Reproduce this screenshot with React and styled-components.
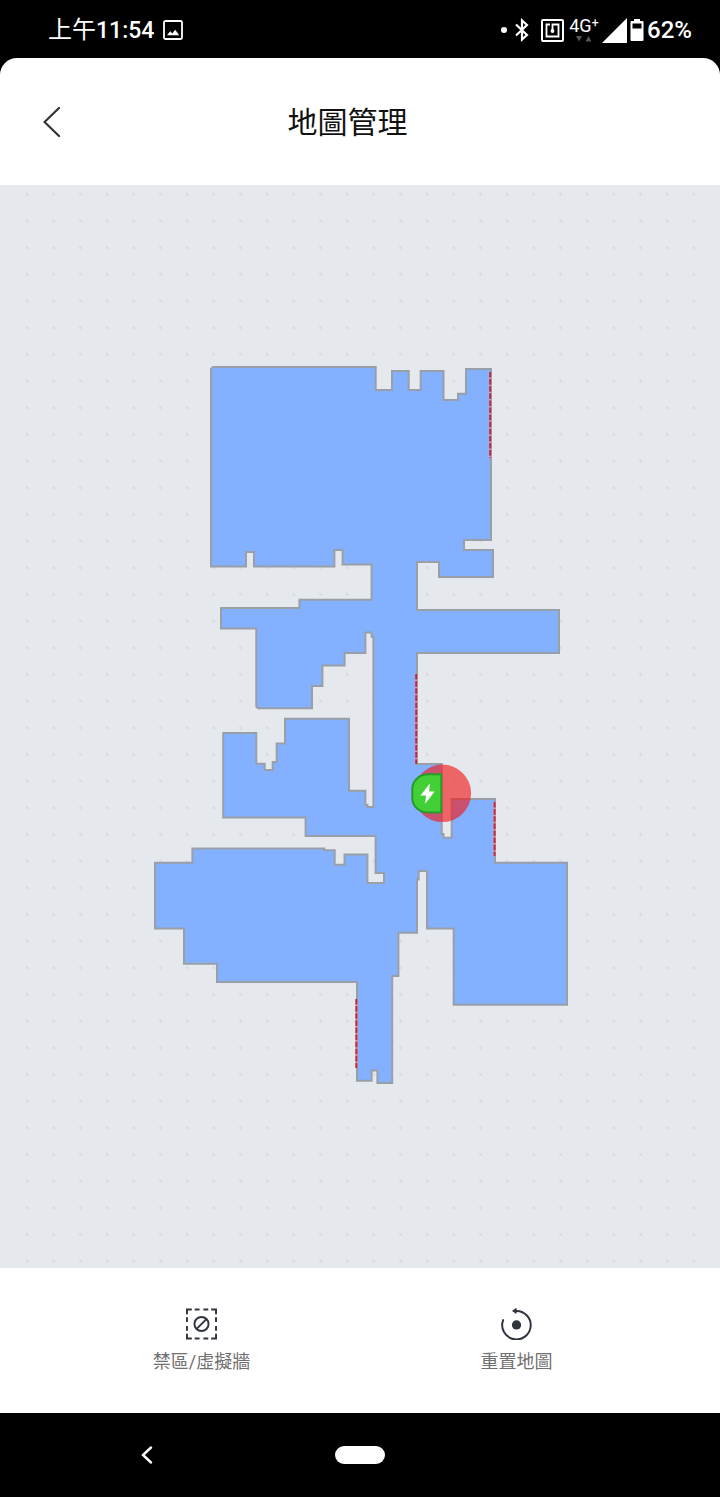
import React from 'react'
import styled, { createGlobalStyle } from 'styled-components'

const GlobalStyle = createGlobalStyle`
    * {
        box-sizing: border-box;
    }

    body {
        margin: 0;
        background: #000;
        font-family: Roboto, "Noto Sans CJK TC", sans-serif;
    }

    button {
        padding: 0;
        border: 0;
        background: none;
        font: inherit;
        color: inherit;
        cursor: pointer;
    }

    svg {
        display: block;
        flex-shrink: 0;
    }
`

const Screen = styled.div`
    display: flex;
    flex-direction: column;
    min-height: 100vh;
`

const StatusBar = styled.div`
    display: flex;
    justify-content: space-between;
    align-items: center;
    height: 58px;
    padding: 2px 28px 0 48px;
    color: #fff;
    font-size: 24px;
    font-weight: 500;
    line-height: 32px;
`

const StatusGroup = styled.div`
    display: flex;
    align-items: center;
    gap: ${props => props.$gap}px;
`

const Time = styled.time`
    font-size: 23px;
`

const Period = styled.span`
    font-size: 24px;
    font-weight: 400;
`

const Radios = styled.div`
    display: flex;
    align-items: center;
    gap: 5px;
    margin-left: 9px;
`

const Network = styled.div`
    display: flex;
    flex-direction: column;
    align-items: center;
    gap: 2px;
    width: 30px;
    font-size: 18px;
    font-weight: 400;
    line-height: 16px;
    white-space: nowrap;

    sup {
        font-size: 13px;
        line-height: 0;
        vertical-align: 5px;
    }
`

const Page = styled.div`
    flex: 1;
    display: flex;
    flex-direction: column;
    overflow: hidden;
    border-radius: 17px 17px 0 0;
    background: #fff;
`

const Header = styled.header`
    display: grid;
    grid-template-columns: 104px 1fr 104px;
    align-items: center;
    height: 127px;
    padding-right: 25px;
`

const BackButton = styled.button`
    display: flex;
    justify-content: center;
    align-items: center;
    height: 64px;
`

const Title = styled.h1`
    margin: 0;
    padding-top: 2px;
    color: #111;
    font-size: 30px;
    font-weight: 400;
    line-height: 40px;
    text-align: center;
`

const MapArea = styled.main`
    flex: 1;
    display: flex;
    background: #e5e8ed;

    svg {
        flex: 1;
        width: 100%;
    }
`

const Actions = styled.footer`
    display: flex;
    height: 145px;
    padding: 2px 46px 0 44px;
`

const ActionButton = styled.button`
    flex: 1;
    display: flex;
    flex-direction: column;
    justify-content: center;
    align-items: center;
    gap: 9px;
`

const ActionLabel = styled.span`
    color: #707070;
    font-size: 18px;
    line-height: 26px;
`

const NavBar = styled.nav`
    display: grid;
    grid-template-columns: 1fr 132px 1fr;
    align-items: center;
    height: 84px;
`

const NavButton = styled.button`
    display: flex;
    justify-content: center;
    align-items: center;
    height: 48px;
`

const HomePill = styled.span`
    width: 50px;
    height: 18px;
    border-radius: 9px;
    background: #fff;
`

const OUTLINE = `
    M211 369 L213 367 H375.7 V390 H392 V371 H408.7 V390 H420.7 V371 H443.5 V400 H458 V393.7 H466 V369 H491
    V540 H464 V550 H493 V577 H439 V562 H417 V610 H559 V653 H417 V764 H441.7 V834 H443.5 V837.7 H451.7 V799 H495
    V862.8 H567 V1004.7 H453.7 V928.5 H427 V871 H418.7 V879.5 H417 V932.7 H398.4 V976 H392.2 V1083 H377.4 V1070.4
    H371.6 V1080.7 H357 V982 H217 V963.7 H184 V928.5 H155 V862.8 H192.4 V848.5 H324.4 V850.3 H334.7 V864.7 H344.5
    V854.4 H367.4 V883 H384 V873 H375.6 V836 H305.6 V817.4 H223.2 V733 H256.3 V763.7 H264.7 V770 H272.7 V762 H276.7
    V743.4 H285 V718.7 H349 V790.7 H365.4 V805 H367.4 V807 H373.4 V636.7 H371.6 V632.4 H365.4 V653 H344.6 V665.4
    H322.4 V686 H312 V708.2 H258 L256.3 706.5 V628.4 H221 V608 H299.4 V599.7 H371.6 V564.5 H342.6 V550 H334.4
    V566.6 H254 V552 H246 V566.6 H211 Z
`

const WALLS = [
    { x: 490.2, y1: 372, y2: 458 },
    { x: 416.2, y1: 674, y2: 764 },
    { x: 494.6, y1: 802, y2: 856 },
    { x: 356.4, y1: 999, y2: 1068 },
]

function FloorMap() {
    return (
        <svg viewBox="0 185 720 1083" preserveAspectRatio="xMidYMid meet" overflow="visible" role="img" aria-label="地圖">
            <defs>
                <pattern id="dots" x="13.7" y="181" width="26.67" height="26.67" patternUnits="userSpaceOnUse">
                    <circle cx="13.33" cy="13.33" r="1.5" fill="#d7dadf" />
                </pattern>
            </defs>
            <rect x="13" y="185" width="694" height="1083" fill="url(#dots)" />
            <path d={OUTLINE} fill="#83b1ff" stroke="#999fa8" strokeWidth="2" />
            {WALLS.map(wall => (
                <g key={wall.y1}>
                    <path d={`M${wall.x} ${wall.y1}V${wall.y2}`} stroke="#d99bb0" strokeWidth="2.4" />
                    <path d={`M${wall.x} ${wall.y1}V${wall.y2}`} stroke="#c02634" strokeWidth="1.9" strokeDasharray="5.6 1.5" />
                </g>
            ))}
            <circle cx="442.3" cy="793.3" r="28.8" fill="#f31a1c" fillOpacity="0.64" />
            <path
                d="M441.3 774.3 H428.5 C419 774.3 412.3 781 412.3 789 V798 C412.3 806 419 812.6 428.5 812.6 H441.3 Z"
                fill="#43d037"
                stroke="#269a2b"
                strokeWidth="2"
                strokeLinejoin="round"
            />
            <path d="M429.8 783.5 L420.5 795.5 H426 L425.2 803.7 L434.6 791.5 H429.2 Z" fill="#fff" />
        </svg>
    )
}

function ImageIcon() {
    return (
        <svg width="20" height="20" viewBox="0 0 20 20">
            <rect x="1" y="1" width="18" height="18" rx="1.5" fill="none" stroke="#fff" strokeWidth="1.8" />
            <path d="M4 15.3 L7.2 11.2 L9.2 13.5 L12.2 9.8 L16.2 15.3 Z" fill="#fff" />
        </svg>
    )
}

function DotIcon() {
    return (
        <svg width="6" height="6" viewBox="0 0 6 6">
            <circle cx="3" cy="3" r="3" fill="#fff" />
        </svg>
    )
}

function BluetoothIcon() {
    return (
        <svg width="14" height="24" viewBox="0 0 14 24" fill="none" stroke="#fff" strokeWidth="2.2">
            <path d="M1 6.5 L12 17 L7 21.5 V2.5 L12 7 L1 17.5" />
        </svg>
    )
}

function NfcIcon() {
    return (
        <svg width="23" height="23" viewBox="0 0 23 23" fill="none" stroke="#fff">
            <rect x="1" y="1" width="21" height="21" rx="1" strokeWidth="2" />
            <path d="M9 5.5 H5.5 V17.5 H17.5 V5.5 H11.5 V11" strokeWidth="1.8" />
            <circle cx="11.5" cy="12" r="1.9" fill="#fff" stroke="none" />
        </svg>
    )
}

function TrafficArrows() {
    return (
        <svg width="16" height="6" viewBox="0 0 16 6" fill="#555">
            <path d="M0 0 H6 L3 5.5 Z M9.5 5.5 H15.5 L12.5 0 Z" />
        </svg>
    )
}

function SignalIcon() {
    return (
        <svg width="25" height="25" viewBox="0 0 25 25">
            <path d="M0 25 L25 0 V25 Z" fill="#fff" />
        </svg>
    )
}

function BatteryIcon() {
    return (
        <svg width="14" height="22" viewBox="0 0 14 22">
            <path d="M4 0 H10 V2 H12.5 Q13.5 2 13.5 3 V21 Q13.5 22 12.5 22 H1.5 Q0.5 22 0.5 21 V3 Q0.5 2 1.5 2 H4 Z" fill="#fff" />
            <rect x="2.5" y="4.5" width="9" height="5" fill="#000" />
        </svg>
    )
}

function ZoneIcon() {
    return (
        <svg width="31" height="32" viewBox="0 0 32 32" fill="none" stroke="#2f343f" strokeWidth="2">
            <path d="M1 6 V1 H6 M26 1 H31 V6 M31 26 V31 H26 M6 31 H1 V26" />
            <path d="M9 1 H14 M18 1 H23 M9 31 H14 M18 31 H23 M1 9 V14 M1 18 V23 M31 9 V14 M31 18 V23" />
            <circle cx="16" cy="16" r="7.3" />
            <path d="M11 21 L21 11" />
        </svg>
    )
}

function ResetIcon() {
    return (
        <svg width="32" height="32" viewBox="0 1 33 33">
            <path d="M2.2 13.5 A14.7 14.7 0 1 0 16 4" fill="none" stroke="#2f343f" strokeWidth="2" strokeLinecap="round" />
            <path d="M12 4 L15.6 1.5 V6.5 Z" fill="#2f343f" stroke="#2f343f" strokeLinejoin="round" />
            <circle cx="16" cy="18.5" r="4.8" fill="#2f343f" />
        </svg>
    )
}

function App() {
    return (
        <Screen>
            <GlobalStyle />
            <StatusBar>
                <StatusGroup $gap={9}>
                    <Time><Period>上午</Period>11:54</Time>
                    <ImageIcon />
                </StatusGroup>
                <StatusGroup $gap={3}>
                    <StatusGroup $gap={8}>
                        <DotIcon />
                        <BluetoothIcon />
                    </StatusGroup>
                    <Radios>
                        <NfcIcon />
                        <Network>
                            <span>4G<sup>+</sup></span>
                            <TrafficArrows />
                        </Network>
                    </Radios>
                    <SignalIcon />
                    <StatusGroup $gap={3}>
                        <BatteryIcon />
                        <span>62%</span>
                    </StatusGroup>
                </StatusGroup>
            </StatusBar>
            <Page>
                <Header>
                    <BackButton aria-label="返回">
                        <svg width="18" height="32" viewBox="0 0 18 32" fill="none" stroke="#333" strokeWidth="2.2" strokeLinecap="round">
                            <path d="M16 2 L1.5 16 L16 30" />
                        </svg>
                    </BackButton>
                    <Title>地圖管理</Title>
                </Header>
                <MapArea>
                    <FloorMap />
                </MapArea>
                <Actions>
                    <ActionButton>
                        <ZoneIcon />
                        <ActionLabel>禁區/虛擬牆</ActionLabel>
                    </ActionButton>
                    <ActionButton>
                        <ResetIcon />
                        <ActionLabel>重置地圖</ActionLabel>
                    </ActionButton>
                </Actions>
            </Page>
            <NavBar>
                <NavButton aria-label="上一頁">
                    <svg width="12" height="18" viewBox="0 0 12 18" fill="none" stroke="#fff" strokeWidth="2.4" strokeLinecap="round">
                        <path d="M10 1.5 L2 9 L10 16.5" />
                    </svg>
                </NavButton>
                <NavButton aria-label="主畫面">
                    <HomePill />
                </NavButton>
            </NavBar>
        </Screen>
    )
}

export default App
